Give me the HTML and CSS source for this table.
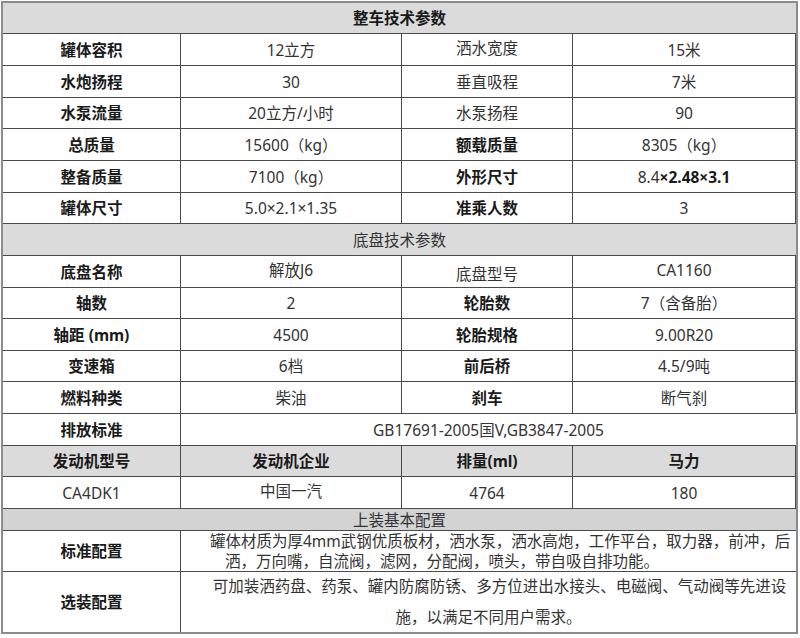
FILE: index.html
```html
<!DOCTYPE html>
<html lang="zh">
<head>
<meta charset="utf-8">
<title>整车技术参数</title>
<link rel="stylesheet" href="styles.css">
</head>
<body>
<div class="spec">
  <div class="cell sec full b">整车技术参数</div>

  <div class="cell b">罐体容积</div><div class="cell">12立方</div><div class="cell up">洒水宽度</div><div class="cell">15米</div>
  <div class="cell b">水炮扬程</div><div class="cell">30</div><div class="cell">垂直吸程</div><div class="cell">7米</div>
  <div class="cell b">水泵流量</div><div class="cell">20立方/小时</div><div class="cell">水泵扬程</div><div class="cell">90</div>
  <div class="cell b">总质量</div><div class="cell">15600（kg）</div><div class="cell b">额载质量</div><div class="cell">8305（kg）</div>
  <div class="cell b">整备质量</div><div class="cell">7100（kg）</div><div class="cell b">外形尺寸</div><div class="cell">8.4<b class="bv">×2.48×3.1</b></div>
  <div class="cell b">罐体尺寸</div><div class="cell">5.0×2.1×1.35</div><div class="cell b">准乘人数</div><div class="cell">3</div>

  <div class="cell sec full">底盘技术参数</div>

  <div class="cell b">底盘名称</div><div class="cell up">解放J6</div><div class="cell down">底盘型号</div><div class="cell up">CA1160</div>
  <div class="cell b">轴数</div><div class="cell">2</div><div class="cell b">轮胎数</div><div class="cell">7（含备胎）</div>
  <div class="cell b">轴距 (mm)</div><div class="cell">4500</div><div class="cell b">轮胎规格</div><div class="cell">9.00R20</div>
  <div class="cell b">变速箱</div><div class="cell">6档</div><div class="cell b">前后桥</div><div class="cell">4.5/9吨</div>
  <div class="cell b">燃料种类</div><div class="cell">柴油</div><div class="cell b">刹车</div><div class="cell">断气刹</div>
  <div class="cell b">排放标准</div><div class="cell span3">GB17691-2005国V,GB3847-2005</div>

  <div class="cell sec b">发动机型号</div><div class="cell sec b">发动机企业</div><div class="cell sec b">排量(ml)</div><div class="cell sec b">马力</div>
  <div class="cell">CA4DK1</div><div class="cell up">中国一汽</div><div class="cell">4764</div><div class="cell">180</div>

  <div class="cell sec2 full">上装基本配置</div>

  <div class="cell b">标准配置</div>
  <div class="cell span3 long"><p class="ln l1">罐体材质为厚4mm武钢优质板材，洒水泵，洒水高炮，工作平台，取力器，前冲，后</p><p class="ln l2">洒，万向嘴，自流阀，滤网，分配阀，喷头，带自吸自排功能。</p></div>

  <div class="cell b last">选装配置</div>
  <div class="cell span3 opt last"><p class="ln o1">可加装洒药盘、药泵、罐内防腐防锈、多方位进出水接头、电磁阀、气动阀等先进设</p><p class="ln o2">施，以满足不同用户需求。</p></div>
</div>
</body>
</html>
```

FILE: styles.css
```css
html, body {
  margin: 0;
  padding: 0;
  background: #ffffff;
}

body {
  padding: 1px 0 0 1px;
  font-family: "Noto Sans", "Noto Sans CJK SC", sans-serif;
  color: #333333;
}

.spec {
  display: grid;
  box-sizing: border-box;
  width: 797px;
  border: 2px solid #8c8c8c;
  grid-template-columns: 178px 221px 171px 223px;
  grid-template-rows: 31px 32px 32px 31px 32px 32px 31px 32px 32px 31px 32px 31px 32px 32px 31px 32px 22px 41px 60px;
  font-size: 15.5px;
}

.cell {
  box-sizing: border-box;
  min-width: 0;
  display: flex;
  align-items: center;
  justify-content: center;
  border-right: 1px solid #4a4a4a;
  border-bottom: 1px solid #4a4a4a;
  line-height: 20px;
  white-space: nowrap;
  color: #333333;
}

.full {
  grid-column: 1 / -1;
  border-right: none;
}

.span3 {
  grid-column: 2 / -1;
  border-right: none;
}

.b {
  font-weight: bold;
  color: #1a1a1a;
}

.bv {
  font-weight: bold;
  color: #1a1a1a;
}

.sec { background: #dbdbdb; }
.sec2 { background: #d3d3d3; }

.up { align-items: flex-start; padding-top: 4px; }
.down { align-items: flex-end; padding-bottom: 3px; }

.last { border-bottom: none; }

.long, .opt {
  flex-direction: column;
  align-items: flex-start;
  justify-content: center;
}

.ln {
  margin: 0;
  width: 100%;
  box-sizing: border-box;
}

.l1 { text-align: left; padding-left: 29px; }
.l2 { text-align: left; padding-left: 44px; }

.opt { line-height: 31px; }
.o1 { text-align: center; padding-left: 22px; }
.o2 { text-align: center; }
```
